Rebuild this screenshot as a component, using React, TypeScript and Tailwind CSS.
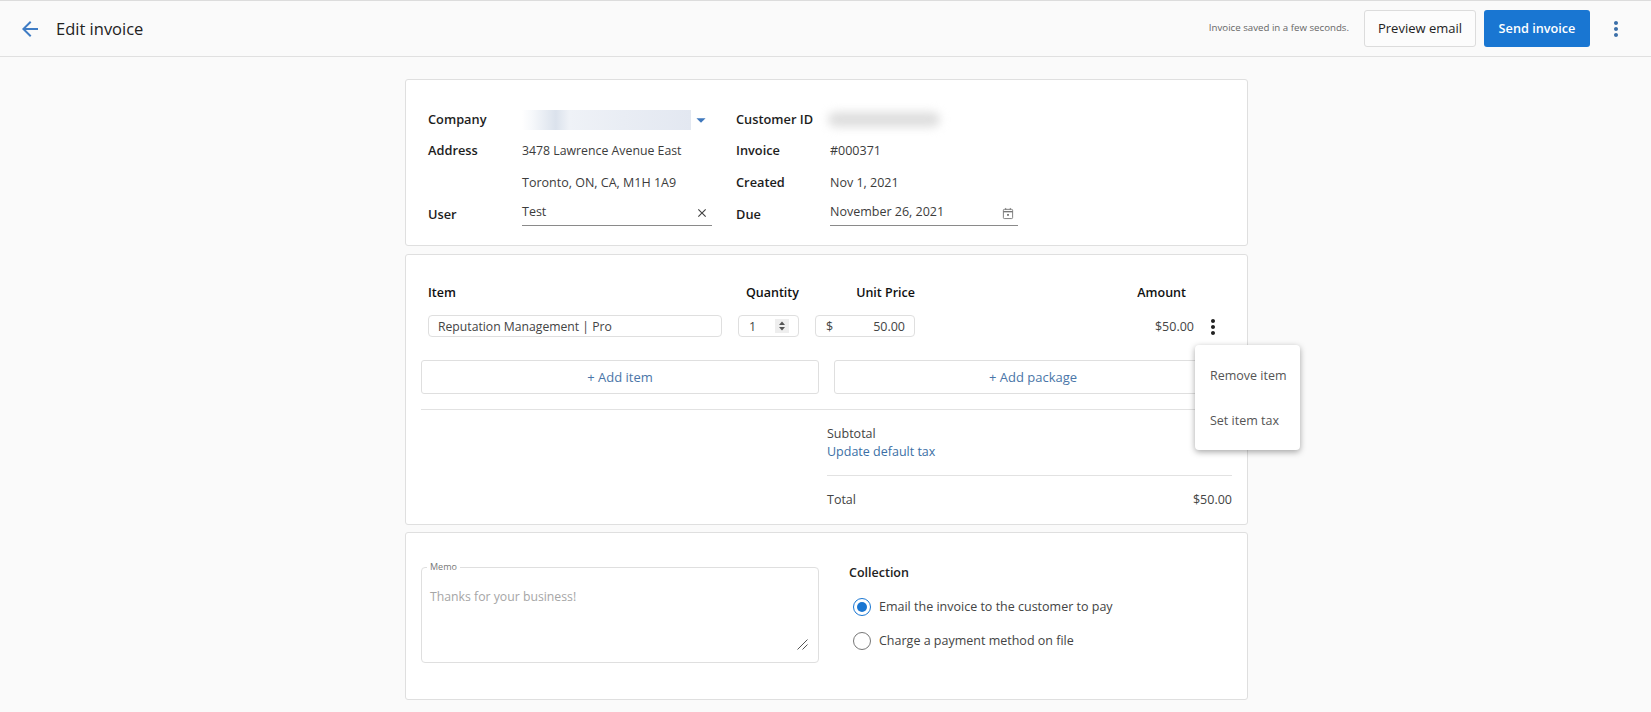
import { MdArrowBack, MdMoreVert, MdClose, MdArrowDropDown } from "react-icons/md";

const Label = ({ children }: { children: React.ReactNode }) => (
  <div className="w-[94px] shrink-0 text-[12.8px] font-semibold text-[#1d1d1d]">{children}</div>
);

function Row({ label, value, label2, value2, first }: { label: string; value: React.ReactNode; label2: string; value2: React.ReactNode; first?: boolean }) {
  return (
    <div className={first ? "flex h-[31px] items-center" : "flex h-[32px] items-center"}>
      <Label>{label}</Label>
      <div className="w-[214px] shrink-0 text-[#3c3c3c]">{value}</div>
      <Label>{label2}</Label>
      <div className="flex-1 text-[#3c3c3c]">{value2}</div>
    </div>
  );
}

function CalendarIcon() {
  return (
    <svg width="12" height="13" viewBox="0 0 13 14" fill="none" className="mr-[1px] mt-[4px] text-[#777]">
      <rect x="1.5" y="2.5" width="10" height="10" rx="1" stroke="currentColor" />
      <path d="M1.5 5h10" stroke="currentColor" strokeWidth="1.5" />
      <path d="M4 1v2M9 1v2" stroke="currentColor" />
      <rect x="5.5" y="7.5" width="2" height="2" fill="currentColor" />
    </svg>
  );
}

export default function App() {
  return (
    <div className="min-h-[712px] border-t border-[#dcdcdc] bg-[#fafafa] font-['Open_Sans','Noto_Sans',sans-serif] text-[12.5px] text-[#333]">
      <header className="flex h-[56px] items-center border-b border-[#e0e0e0] pl-[18px] pr-[23px]">
        <MdArrowBack size={24} className="text-[#3f7cc4]" />
        <h1 className="ml-[14px] pt-[1px] text-[16.5px] text-[#222]">Edit invoice</h1>
        <div className="ml-auto text-[9.7px] text-[#666]">Invoice saved in a few seconds.</div>
        <button className="ml-[15px] h-[37px] w-[112px] rounded-[3px] border border-[#dcdcdc] bg-[#fcfcfc] pt-[1px] text-[13px] text-[#222]">Preview email</button>
        <button className="ml-[8px] h-[37px] w-[106px] rounded-[3px] bg-[#1976d2] pt-[1px] text-[12.7px] font-semibold text-white">Send invoice</button>
        <MdMoreVert size={24} className="ml-[14px] text-[#3b6fa8]" />
      </header>

      <main className="ml-[405px] flex w-[843px] flex-col gap-[8px] pt-[22px]">
        <section className="rounded-[3px] border border-[#dfdfdf] bg-white pb-[14px] pl-[22px] pt-[24px]">
          <Row
            first
            label="Company"
            value={
              <div className="relative flex w-[190px] items-center">
                <div className="h-[20px] w-[169px] bg-[linear-gradient(90deg,#ffffff_0%,#f6f8fb_6%,#dbe2ec_20%,#eff2f7_28%,#e9edf4_60%,#e3e8f1_100%)]" />
                <MdArrowDropDown size={22} className="absolute left-[168px] top-[-1px] text-[#3f78bd]" />
              </div>
            }
            label2="Customer ID"
            value2={<div className="-ml-[2px] h-[15px] w-[112px] rounded-full bg-[#dedede] blur-[5px]" />}
          />
          <Row label="Address" value={<span className="text-[12.3px]">3478 Lawrence Avenue East</span>} label2="Invoice" value2="#000371" />
          <Row label="" value="Toronto, ON, CA, M1H 1A9" label2="Created" value2="Nov 1, 2021" />
          <Row
            label="User"
            value={
              <div className="-mt-[3px] flex h-[25px] w-[190px] items-start justify-between border-b border-[#8a8a8a] pr-[3px] pt-[2px]">
                <span>Test</span>
                <MdClose size={14} className="mt-[3px] text-[#444]" />
              </div>
            }
            label2="Due"
            value2={
              <div className="-mt-[3px] flex h-[25px] w-[188px] items-start justify-between border-b border-[#8a8a8a] pr-[3px] pt-[2px]">
                <span>November 26, 2021</span>
                <CalendarIcon />
              </div>
            }
          />
        </section>

        <section className="relative h-[271px] rounded-[3px] border border-[#dfdfdf] bg-white px-[15px] pt-[28px]">
          <div className="flex h-[20px] items-center pl-[7px] font-semibold text-[#111]">
            <div className="w-[294px]">Item</div>
            <div className="ml-[16px] w-[61px] text-right">Quantity</div>
            <div className="ml-[16px] w-[100px] text-right">Unit Price</div>
            <div className="w-[271px] text-right">Amount</div>
          </div>
          <div className="mt-[12px] flex h-[22px] items-center pl-[7px]">
            <div className="flex h-full w-[294px] items-center rounded-[4px] border border-[#dfdfdf] pl-[9px] pt-[2px] text-[12.2px] text-[#444]">Reputation Management | Pro</div>
            <div className="ml-[16px] flex h-full w-[61px] items-center justify-between rounded-[4px] border border-[#dfdfdf] pl-[10px] pr-[9px] text-[#444]">
              <span className="pt-[2px]">1</span>
              <span className="flex h-[14px] w-[14px] items-center justify-center bg-[#eeeeee]">
                <svg width="8" height="12" viewBox="0 0 8 12" className="text-[#555]" fill="currentColor">
                  <path d="M4 1.5 7 5H1z" />
                  <path d="M4 10.5 1 7h6z" />
                </svg>
              </span>
            </div>
            <div className="ml-[16px] flex h-full w-[100px] items-center justify-between rounded-[4px] border border-[#dfdfdf] pl-[10px] pr-[9px] pt-[2px] text-[#444]">
              <span>$</span>
              <span>50.00</span>
            </div>
            <div className="w-[279px] pt-[2px] text-right text-[#444]">$50.00</div>
            <MdMoreVert size={24} className="ml-[7px] mt-[2px] text-[#222]" />
          </div>
          <div className="mt-[23px] flex gap-[15px]">
            <button className="h-[34px] w-[398px] rounded-[3px] border border-[#dfdfdf] pt-[1px] text-[13px] font-medium text-[#4a76a8]">+ Add item</button>
            <button className="h-[34px] w-[398px] rounded-[3px] border border-[#dfdfdf] pt-[1px] text-[13px] font-medium text-[#4a76a8]">+ Add package</button>
          </div>
          <div className="mt-[15px] border-t border-[#e2e2e2]" />
          <div className="ml-[406px] mt-[15px] leading-[18px] text-[#444]">
            <div>Subtotal</div>
            <a className="text-[#3b6fa5]">Update default tax</a>
            <div className="mt-[14px] flex justify-between border-t border-[#e2e2e2] pt-[15px]">
              <span>Total</span>
              <span>$50.00</span>
            </div>
          </div>
          <div className="absolute left-[789px] top-[90px] flex h-[105px] w-[105px] flex-col justify-center gap-[26px] rounded-[4px] bg-white pl-[15px] pt-[2px] text-[#555] shadow-[0_2px_6px_rgba(0,0,0,0.35)]">
            <div>Remove item</div>
            <div>Set item tax</div>
          </div>
        </section>

        <section className="-mt-[1px] flex h-[168px] rounded-[3px] border border-[#dfdfdf] bg-white pl-[15px] pt-[27px]">
          <fieldset className="relative h-[103px] w-[398px] rounded-[4px] border border-[#dfdfdf]">
            <legend className="ml-[5px] px-[3px] text-[9px] leading-[14px] text-[#777]">Memo</legend>
            <textarea
              placeholder="Thanks for your business!"
              className="h-[87px] w-[396px] resize-none pl-[8px] pt-[14px] text-[12.25px] outline-none placeholder:text-[#a6a6a6]"
            />
            <svg width="11" height="11" viewBox="0 0 11 11" className="absolute bottom-[12px] right-[10px] text-[#555]" fill="none" stroke="currentColor">
              <path d="M0.5 10.5 10.5 0.5M5.5 10.5l5-5" />
            </svg>
          </fieldset>
          <div className="ml-[30px] pt-[3px] text-[#444]">
            <div className="font-semibold leading-[20px] text-[#222]">Collection</div>
            <label className="ml-[4px] mt-[14px] flex h-[20px] items-center gap-[8px]">
              <span className="flex h-[18px] w-[18px] items-center justify-center rounded-full border border-[#1976d2]">
                <span className="h-[10px] w-[10px] rounded-full bg-[#1976d2]" />
              </span>
              Email the invoice to the customer to pay
            </label>
            <label className="ml-[4px] mt-[14px] flex h-[20px] items-center gap-[8px]">
              <span className="h-[18px] w-[18px] rounded-full border border-[#777]" />
              Charge a payment method on file
            </label>
          </div>
        </section>
      </main>
    </div>
  );
}
